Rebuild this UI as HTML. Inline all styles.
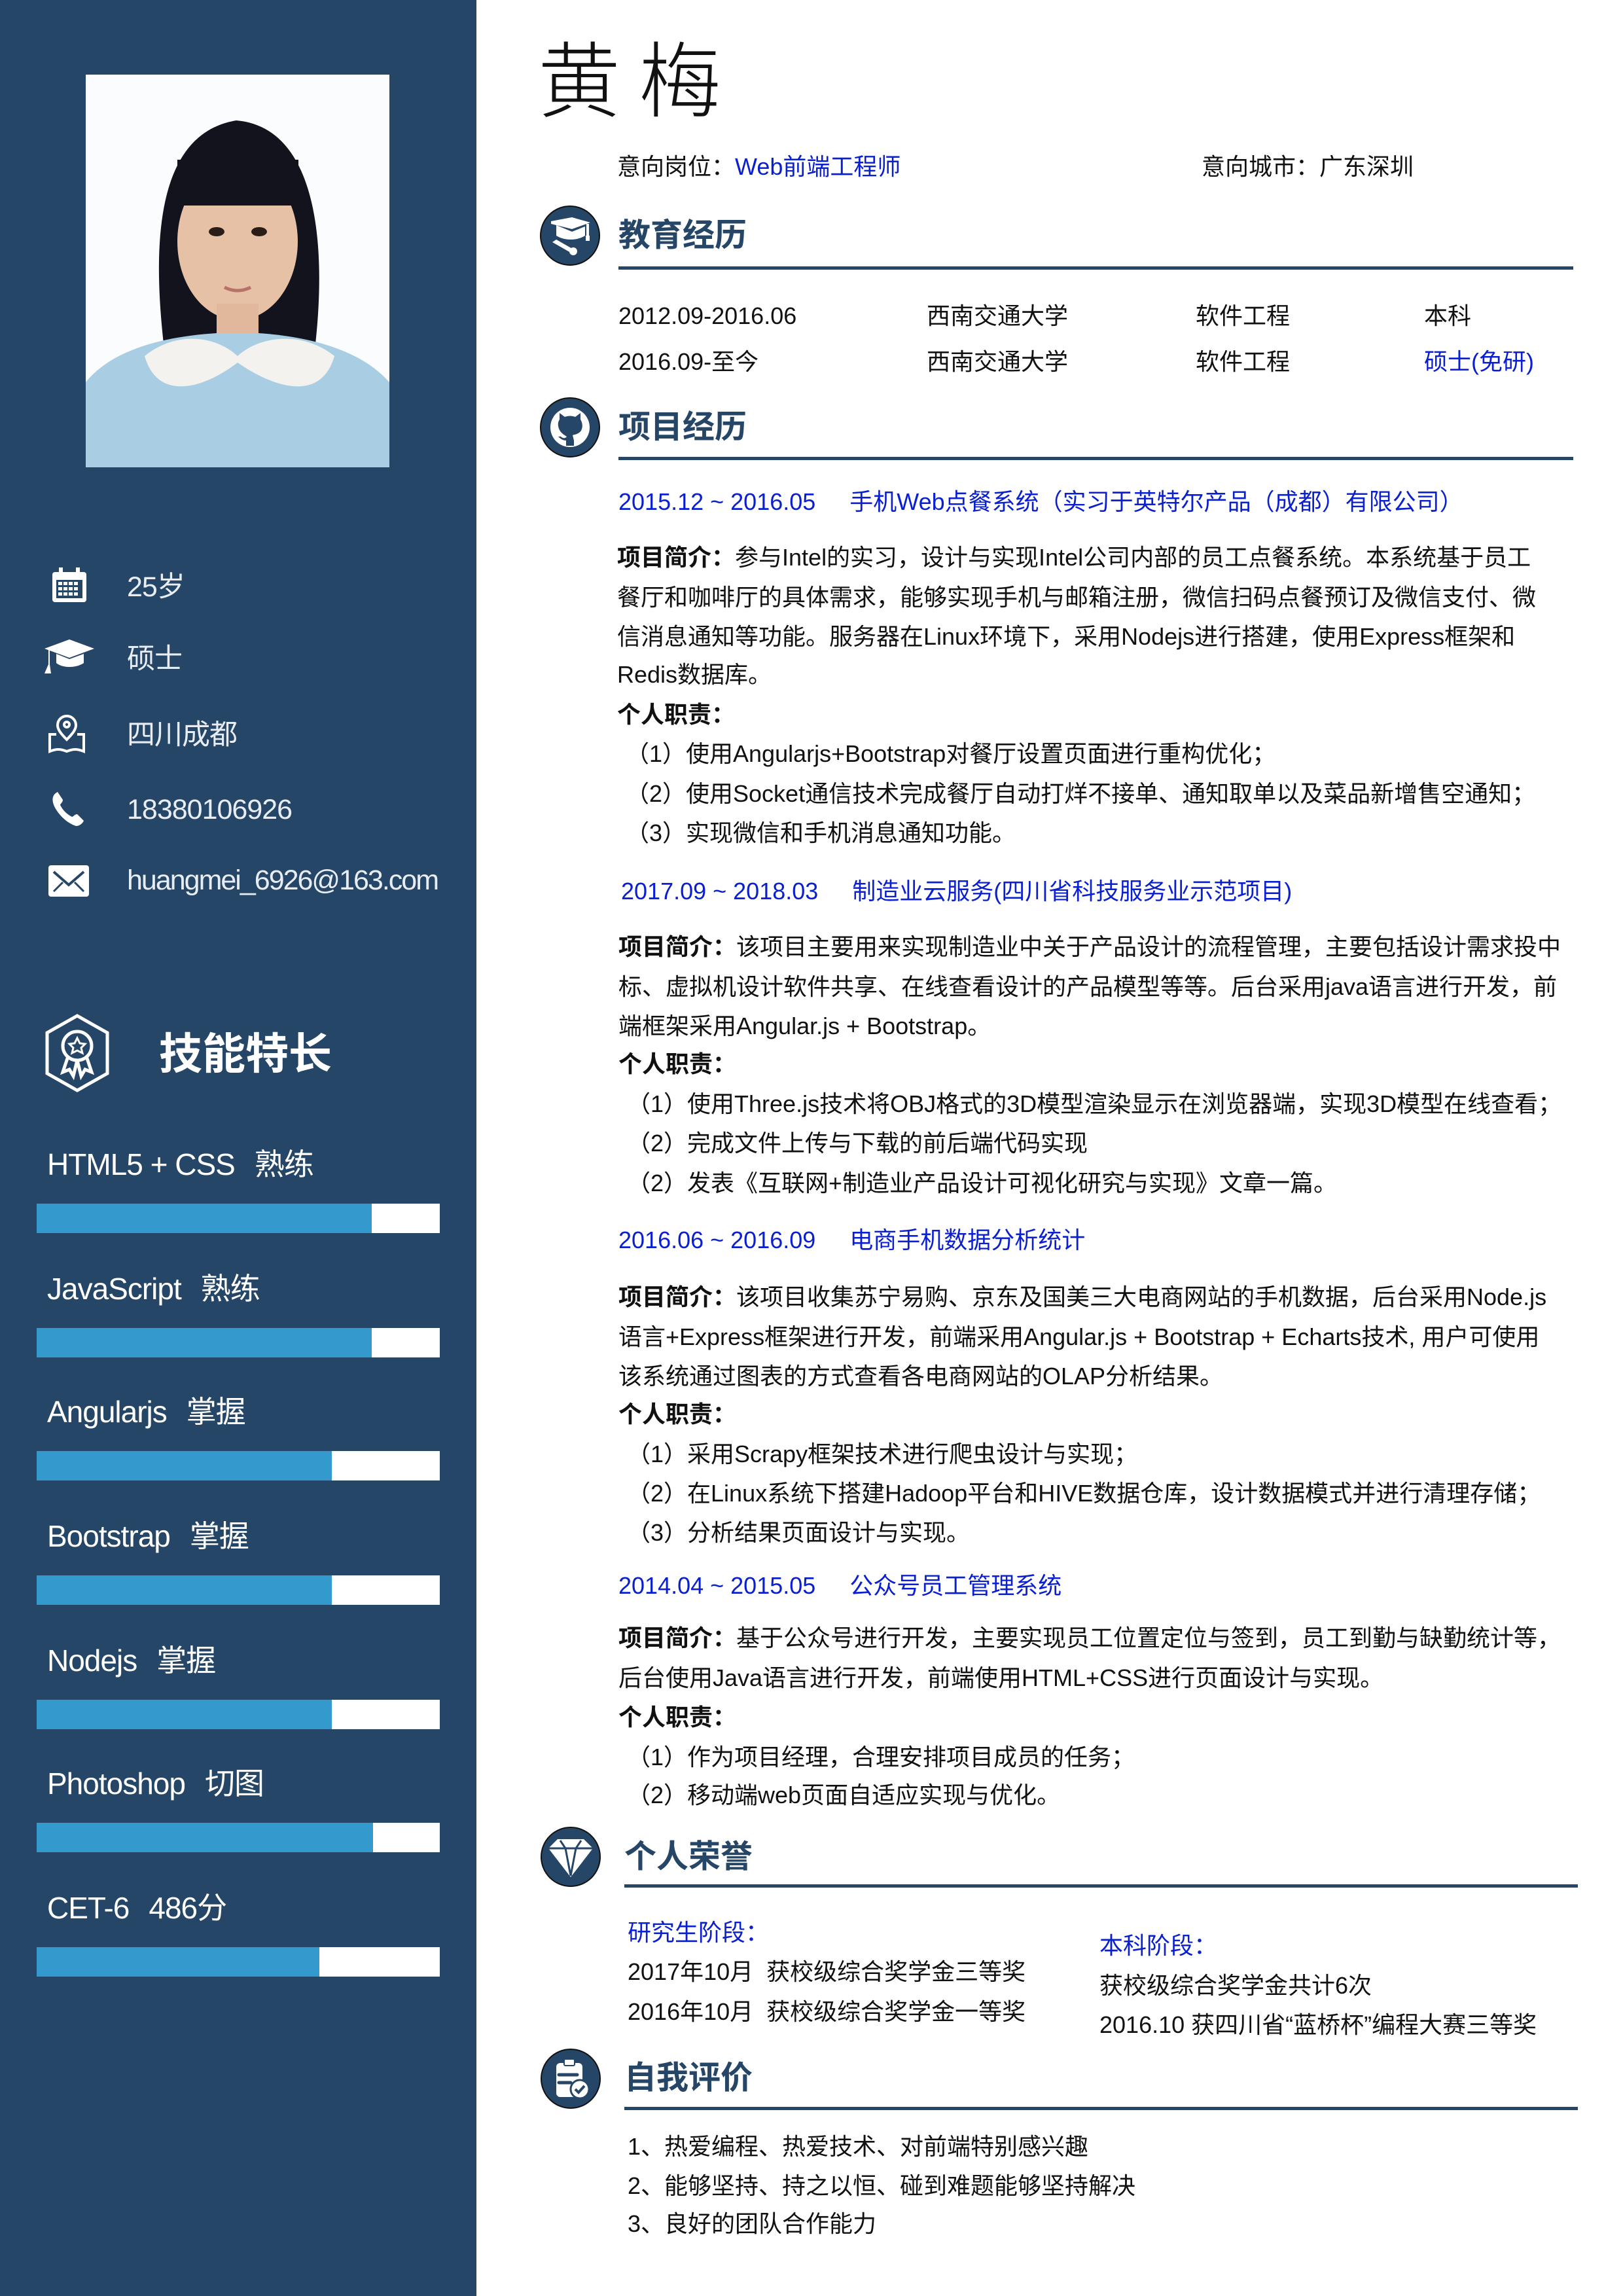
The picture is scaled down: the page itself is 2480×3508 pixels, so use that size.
<!DOCTYPE html>
<html><head><meta charset="utf-8">
<style>
*{margin:0;padding:0;box-sizing:border-box}
body{width:2480px;height:3508px;position:relative;background:#fff;font-family:"Liberation Sans","Noto Sans CJK SC",sans-serif;color:#111;overflow:hidden}
#side{position:absolute;left:0;top:0;width:728px;height:3508px;background:#264667}
.l{position:absolute;height:60px;line-height:60px;white-space:nowrap;font-size:36px}
.c{position:absolute;color:#e8edf3;font-size:43px;height:60px;line-height:60px;white-space:nowrap;left:194px;letter-spacing:-1px}
.ic{position:absolute}
.sk{position:absolute;left:72px;color:#fff;font-size:46px;height:70px;line-height:70px;white-space:nowrap;letter-spacing:-1px}
.sk span{margin-left:30px}
.bar{position:absolute;left:56px;width:616px;height:45px;background:#fff}
.bar i{display:block;height:45px;background:#3499cd}
.h{position:absolute;font-size:49px;font-weight:bold;color:#264667;height:70px;line-height:70px;white-space:nowrap}
.hl{position:absolute;height:5px;background:#264667}
.circ{position:absolute;width:92px;height:92px;border-radius:50%;background:#264667;border:2px solid #111}
.b{color:#0a1fd0}
strong{font-weight:bold}
</style></head><body>
<div id="side"></div>
<svg class="ic" style="left:131px;top:114px" width="464" height="600" viewBox="0 0 464 600">
<rect width="464" height="600" fill="#fbfcfd"/>
<path d="M120 420 C100 250 110 90 230 70 C350 80 370 250 350 420 Z" fill="#12131c"/>
<ellipse cx="232" cy="255" rx="92" ry="120" fill="#e7c1a6"/>
<rect x="140" y="130" width="185" height="70" fill="#12131c"/>
<rect x="200" y="350" width="64" height="70" fill="#e2b89c"/>
<path d="M0 600 L0 470 C40 420 120 400 200 395 L264 395 C340 400 420 420 464 470 L464 600Z" fill="#a9cde3"/>
<path d="M90 430 C140 390 200 400 232 430 C264 400 330 390 380 430 C360 500 290 480 232 440 C180 480 110 500 90 430Z" fill="#f4f2ef"/>
<ellipse cx="200" cy="240" rx="12" ry="7" fill="#2a1d18"/><ellipse cx="265" cy="240" rx="12" ry="7" fill="#2a1d18"/>
<path d="M212 325 Q232 335 252 325" stroke="#b7736a" stroke-width="5" fill="none"/>
</svg>

<svg class="ic" style="left:78px;top:866px" width="56" height="56" viewBox="0 0 56 56"><rect x="2" y="8" width="52" height="46" rx="4" fill="#fff"/><rect x="8" y="20" width="40" height="28" fill="#264667"/><g fill="#fff"><rect x="11" y="23" width="6" height="5"/><rect x="19" y="23" width="6" height="5"/><rect x="27" y="23" width="6" height="5"/><rect x="35" y="23" width="6" height="5"/><rect x="11" y="31" width="6" height="5"/><rect x="19" y="31" width="6" height="5"/><rect x="27" y="31" width="6" height="5"/><rect x="35" y="31" width="6" height="5"/><rect x="11" y="39" width="6" height="5"/><rect x="19" y="39" width="6" height="5"/><rect x="27" y="39" width="6" height="5"/><rect x="35" y="39" width="6" height="5"/></g><rect x="12" y="1" width="6" height="12" fill="#fff"/><rect x="38" y="1" width="6" height="12" fill="#fff"/></svg>
<svg class="ic" style="left:66px;top:975px" width="80" height="60" viewBox="0 0 80 60"><path d="M2 16 L40 2 L78 16 L40 30Z" fill="#fff"/><path d="M20 24 L20 38 C30 46 50 46 62 38 L62 24 L40 32Z" fill="#fff"/><path d="M8 18 L8 40 L2 54 L12 54 L10 40 L10 18" fill="#fff"/></svg>
<svg class="ic" style="left:72px;top:1092px" width="60" height="62" viewBox="0 0 60 62" fill="none" stroke="#fff" stroke-width="4"><path d="M30 38 C20 28 16 22 16 16 A14 14 0 0 1 44 16 C44 22 40 28 30 38Z"/><circle cx="30" cy="15" r="4"/><path d="M14 30 L4 30 L4 56 C14 52 20 52 30 56 C40 52 46 52 56 56 L56 30 L46 30"/></svg>
<svg class="ic" style="left:76px;top:1208px" width="56" height="56" viewBox="0 0 56 56"><path d="M12 2 C4 6 2 14 8 26 C16 40 28 50 40 54 C46 54 50 50 52 46 L42 36 C38 36 36 40 34 40 C26 36 20 30 16 22 C16 20 20 18 20 14Z" fill="#fff"/></svg>
<svg class="ic" style="left:74px;top:1322px" width="62" height="48" viewBox="0 0 62 48"><rect x="0" y="0" width="62" height="48" rx="4" fill="#fff"/><path d="M8 10 L31 30 L54 10" stroke="#264667" stroke-width="4" fill="none"/><path d="M8 40 L22 26 M54 40 L40 26" stroke="#264667" stroke-width="3"/></svg>

<div class="c" style="top:867px">25岁</div>
<div class="c" style="top:977px">硕士</div>
<div class="c" style="top:1093px">四川成都</div>
<div class="c" style="top:1207px">18380106926</div>
<div class="c" style="top:1315px;letter-spacing:-2px">huangmei_6926@163.com</div>

<svg class="ic" style="left:66px;top:1548px" width="104" height="122" viewBox="0 0 104 122" fill="none" stroke="#fff" stroke-width="5"><path d="M52 4 L98 30 L98 92 L52 118 L6 92 L6 30Z"/><circle cx="52" cy="50" r="22"/><path d="M52 38 L56 46 L64 47 L58 53 L60 61 L52 57 L44 61 L46 53 L40 47 L48 46Z" stroke-width="3"/><path d="M38 66 L30 90 L40 86 L46 96 L52 72 L58 96 L64 86 L74 90 L66 66"/></svg>
<div class="h" style="left:243px;top:1574px;color:#fff;font-size:66px;height:72px;line-height:72px">技能特长</div>

<div class="sk" style="top:1744px">HTML5 + CSS<span>熟练</span></div>
<div class="bar" style="top:1839px"><i style="width:512px"></i></div>
<div class="sk" style="top:1934px">JavaScript<span>熟练</span></div>
<div class="bar" style="top:2029px"><i style="width:512px"></i></div>
<div class="sk" style="top:2122px">Angularjs<span>掌握</span></div>
<div class="bar" style="top:2217px"><i style="width:451px"></i></div>
<div class="sk" style="top:2312px">Bootstrap<span>掌握</span></div>
<div class="bar" style="top:2407px"><i style="width:451px"></i></div>
<div class="sk" style="top:2502px">Nodejs<span>掌握</span></div>
<div class="bar" style="top:2597px"><i style="width:451px"></i></div>
<div class="sk" style="top:2690px">Photoshop<span>切图</span></div>
<div class="bar" style="top:2785px"><i style="width:514px"></i></div>
<div class="sk" style="top:2880px">CET-6<span>486分</span></div>
<div class="bar" style="top:2975px"><i style="width:432px"></i></div>

<div style="position:absolute;left:822px;top:40px;font-size:126px;line-height:150px;font-weight:300;color:#111;white-space:nowrap;font-family:'Noto Sans CJK SC',sans-serif">黄 梅</div>
<div class="l" style="left:943px;top:225px">意向岗位：<span class="b">Web前端工程师</span></div>
<div class="l" style="left:1836px;top:225px">意向城市：广东深圳</div>

<div class="circ" style="left:825px;top:314px"></div>
<svg class="ic" style="left:832px;top:324px" width="80" height="72" viewBox="0 0 80 72"><path d="M10 14 L42 8 L70 16 L42 26 L10 18Z" fill="#fff"/><path d="M18 20 L18 36 C30 44 50 44 62 36 L62 22 L42 30Z" fill="#fff"/><rect x="64" y="18" width="4" height="20" fill="#fff"/><rect x="63" y="36" width="6" height="8" fill="#fff"/><path d="M12 46 L40 62 L46 58 L18 42Z" fill="#fff"/><circle cx="44" cy="60" r="6" fill="#fff"/></svg>
<div class="h" style="left:945px;top:325px">教育经历</div>
<div class="hl" style="left:945px;top:407px;width:1459px"></div>
<div class="l" style="left:945px;top:453px">2012.09-2016.06</div>
<div class="l" style="left:1416px;top:453px">西南交通大学</div>
<div class="l" style="left:1827px;top:453px">软件工程</div>
<div class="l" style="left:2176px;top:453px">本科</div>
<div class="l" style="left:945px;top:523px">2016.09-至今</div>
<div class="l" style="left:1416px;top:523px">西南交通大学</div>
<div class="l" style="left:1827px;top:523px">软件工程</div>
<div class="l b" style="left:2176px;top:523px">硕士(免研)</div>

<div class="circ" style="left:825px;top:607px"></div>
<svg class="ic" style="left:835px;top:617px" width="72" height="72" viewBox="0 0 72 72"><circle cx="36" cy="36" r="30" fill="#fff"/><path d="M20 24 L20 14 L28 20 C33 18 39 18 44 20 L52 14 L52 24 C56 30 56 40 50 44 C46 47 42 47 40 48 L42 56 L42 64 L30 64 L30 56 C24 56 20 52 18 50 L22 50 C26 54 30 52 31 50 C26 47 22 44 20 40 C17 34 17 28 20 24Z" fill="#264667"/></svg>
<div class="h" style="left:945px;top:618px">项目经历</div>
<div class="hl" style="left:945px;top:698px;width:1459px"></div>

<div class="l b" style="left:945px;top:737px">2015.12 ~ 2016.05<span style="margin-left:52px">手机Web点餐系统（实习于英特尔产品（成都）有限公司）</span></div>
<div class="l" style="left:943px;top:822px"><strong>项目简介：</strong>参与Intel的实习，设计与实现Intel公司内部的员工点餐系统。本系统基于员工</div>
<div class="l" style="left:943px;top:883px">餐厅和咖啡厅的具体需求，能够实现手机与邮箱注册，微信扫码点餐预订及微信支付、微</div>
<div class="l" style="left:943px;top:943px">信消息通知等功能。服务器在Linux环境下，采用Nodejs进行搭建，使用Express框架和</div>
<div class="l" style="left:943px;top:1001px">Redis数据库。</div>
<div class="l" style="left:943px;top:1062px"><strong>个人职责：</strong></div>
<div class="l" style="left:956px;top:1122px">（1）使用Angularjs+Bootstrap对餐厅设置页面进行重构优化；</div>
<div class="l" style="left:956px;top:1183px">（2）使用Socket通信技术完成餐厅自动打烊不接单、通知取单以及菜品新增售空通知；</div>
<div class="l" style="left:956px;top:1243px">（3）实现微信和手机消息通知功能。</div>

<div class="l b" style="left:949px;top:1332px">2017.09 ~ 2018.03<span style="margin-left:52px">制造业云服务(四川省科技服务业示范项目)</span></div>
<div class="l" style="left:945px;top:1417px"><strong>项目简介：</strong>该项目主要用来实现制造业中关于产品设计的流程管理，主要包括设计需求投中</div>
<div class="l" style="left:945px;top:1478px">标、虚拟机设计软件共享、在线查看设计的产品模型等等。后台采用java语言进行开发，前</div>
<div class="l" style="left:945px;top:1538px">端框架采用Angular.js + Bootstrap。</div>
<div class="l" style="left:945px;top:1596px"><strong>个人职责：</strong></div>
<div class="l" style="left:958px;top:1657px">（1）使用Three.js技术将OBJ格式的3D模型渲染显示在浏览器端，实现3D模型在线查看；</div>
<div class="l" style="left:958px;top:1717px">（2）完成文件上传与下载的前后端代码实现</div>
<div class="l" style="left:958px;top:1778px">（2）发表《互联网+制造业产品设计可视化研究与实现》文章一篇。</div>

<div class="l b" style="left:945px;top:1865px">2016.06 ~ 2016.09<span style="margin-left:52px">电商手机数据分析统计</span></div>
<div class="l" style="left:945px;top:1952px"><strong>项目简介：</strong>该项目收集苏宁易购、京东及国美三大电商网站的手机数据，后台采用Node.js</div>
<div class="l" style="left:945px;top:2013px">语言+Express框架进行开发，前端采用Angular.js + Bootstrap + Echarts技术, 用户可使用</div>
<div class="l" style="left:945px;top:2073px">该系统通过图表的方式查看各电商网站的OLAP分析结果。</div>
<div class="l" style="left:945px;top:2131px"><strong>个人职责：</strong></div>
<div class="l" style="left:958px;top:2192px">（1）采用Scrapy框架技术进行爬虫设计与实现；</div>
<div class="l" style="left:958px;top:2252px">（2）在Linux系统下搭建Hadoop平台和HIVE数据仓库，设计数据模式并进行清理存储；</div>
<div class="l" style="left:958px;top:2312px">（3）分析结果页面设计与实现。</div>

<div class="l b" style="left:945px;top:2393px">2014.04 ~ 2015.05<span style="margin-left:52px">公众号员工管理系统</span></div>
<div class="l" style="left:945px;top:2473px"><strong>项目简介：</strong>基于公众号进行开发，主要实现员工位置定位与签到，员工到勤与缺勤统计等，</div>
<div class="l" style="left:945px;top:2534px">后台使用Java语言进行开发，前端使用HTML+CSS进行页面设计与实现。</div>
<div class="l" style="left:945px;top:2594px"><strong>个人职责：</strong></div>
<div class="l" style="left:958px;top:2655px">（1）作为项目经理，合理安排项目成员的任务；</div>
<div class="l" style="left:958px;top:2713px">（2）移动端web页面自适应实现与优化。</div>

<div class="circ" style="left:826px;top:2791px"></div>
<svg class="ic" style="left:836px;top:2806px" width="72" height="64" viewBox="0 0 72 64"><path d="M16 4 L56 4 L70 18 L36 62 L2 18Z" fill="#fff"/><path d="M2 18 L70 18 M20 6 L28 18 L36 60 L44 18 L52 6" stroke="#264667" stroke-width="3" fill="none"/></svg>
<div class="h" style="left:954px;top:2802px">个人荣誉</div>
<div class="hl" style="left:954px;top:2879px;width:1457px"></div>
<div class="l b" style="left:959px;top:2923px">研究生阶段：</div>
<div class="l" style="left:959px;top:2983px">2017年10月&nbsp;&nbsp;获校级综合奖学金三等奖</div>
<div class="l" style="left:959px;top:3044px">2016年10月&nbsp;&nbsp;获校级综合奖学金一等奖</div>
<div class="l b" style="left:1680px;top:2943px">本科阶段：</div>
<div class="l" style="left:1680px;top:3004px">获校级综合奖学金共计6次</div>
<div class="l" style="left:1680px;top:3064px">2016.10 获四川省“蓝桥杯”编程大赛三等奖</div>

<div class="circ" style="left:826px;top:3130px"></div>
<svg class="ic" style="left:842px;top:3144px" width="64" height="66" viewBox="0 0 64 66"><rect x="8" y="8" width="40" height="52" rx="6" fill="#fff"/><rect x="20" y="2" width="16" height="10" rx="2" fill="#fff" stroke="#264667" stroke-width="2"/><path d="M12 26 L40 26 M12 38 L30 38" stroke="#264667" stroke-width="5" stroke-linecap="round"/><circle cx="44" cy="48" r="14" fill="#fff" stroke="#264667" stroke-width="3"/><path d="M37 48 L42 53 L51 43" stroke="#264667" stroke-width="4" fill="none"/></svg>
<div class="h" style="left:954px;top:3140px">自我评价</div>
<div class="hl" style="left:954px;top:3219px;width:1457px"></div>
<div class="l" style="left:959px;top:3250px">1、热爱编程、热爱技术、对前端特别感兴趣</div>
<div class="l" style="left:959px;top:3310px">2、能够坚持、持之以恒、碰到难题能够坚持解决</div>
<div class="l" style="left:959px;top:3368px">3、良好的团队合作能力</div>
</body></html>
